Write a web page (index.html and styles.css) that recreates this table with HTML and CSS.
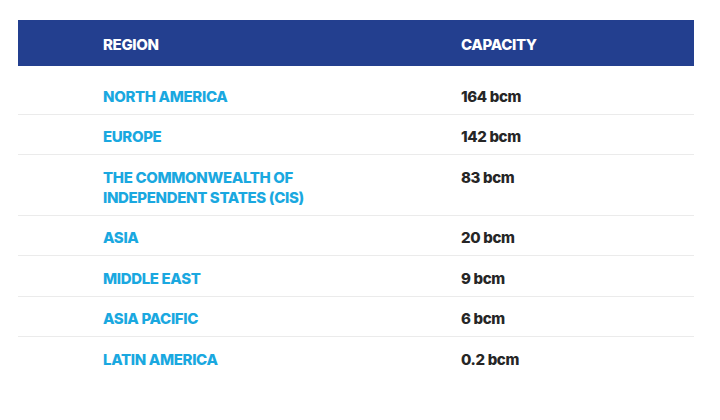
FILE: index.html
```html
<!DOCTYPE html>
<html lang="en">
<head>
<meta charset="utf-8">
<title>Capacity by region</title>
<link rel="stylesheet" href="styles.css">
</head>
<body>
<div class="wrap">
  <table class="cap-table">
    <colgroup>
      <col class="col-region">
      <col class="col-capacity">
    </colgroup>
    <thead>
      <tr>
        <th class="c-region">REGION</th>
        <th class="c-cap">CAPACITY</th>
      </tr>
    </thead>
    <tbody>
      <tr class="first">
        <td class="c-region">NORTH AMERICA</td>
        <td class="c-cap">164 bcm</td>
      </tr>
      <tr>
        <td class="c-region">EUROPE</td>
        <td class="c-cap">142 bcm</td>
      </tr>
      <tr>
        <td class="c-region">THE COMMONWEALTH OF<br>INDEPENDENT STATES (CIS)</td>
        <td class="c-cap">83 bcm</td>
      </tr>
      <tr>
        <td class="c-region">ASIA</td>
        <td class="c-cap">20 bcm</td>
      </tr>
      <tr>
        <td class="c-region">MIDDLE EAST</td>
        <td class="c-cap">9 bcm</td>
      </tr>
      <tr>
        <td class="c-region">ASIA PACIFIC</td>
        <td class="c-cap">6 bcm</td>
      </tr>
      <tr class="last">
        <td class="c-region">LATIN AMERICA</td>
        <td class="c-cap">0.2 bcm</td>
      </tr>
    </tbody>
  </table>
</div>
</body>
</html>
```

FILE: styles.css
```css
html, body {
  margin: 0;
  padding: 0;
  background: #ffffff;
}

.wrap {
  padding: 20px 26px 0 18px;
}

.cap-table {
  width: 676px;
  border-collapse: collapse;
  table-layout: fixed;
  font-family: "Inter", "Liberation Sans", sans-serif;
  font-weight: 800;
  font-size: 15px;
  line-height: 20px;
  letter-spacing: -0.35px;
}

.col-region {
  width: 443px;
}

.cap-table th,
.cap-table td {
  text-align: left;
  vertical-align: top;
}

.cap-table .c-region {
  padding-left: 85px;
}

.cap-table .c-cap {
  padding-left: 0;
}

.cap-table thead tr {
  background: #233f8f;
}

.cap-table th {
  color: #ffffff;
  padding-top: 14.5px;
  padding-bottom: 11.5px;
  font-weight: 800;
}

.cap-table td {
  padding-top: 12.5px;
  padding-bottom: 7px;
}

.cap-table tbody tr {
  border-bottom: 1px solid #ebebeb;
}

.cap-table tbody tr.first td {
  padding-top: 20.5px;
}

.cap-table tbody tr.last {
  border-bottom: none;
}

.cap-table td.c-region {
  color: #1aa8e0;
}

.cap-table td.c-cap {
  color: #262626;
}
```
